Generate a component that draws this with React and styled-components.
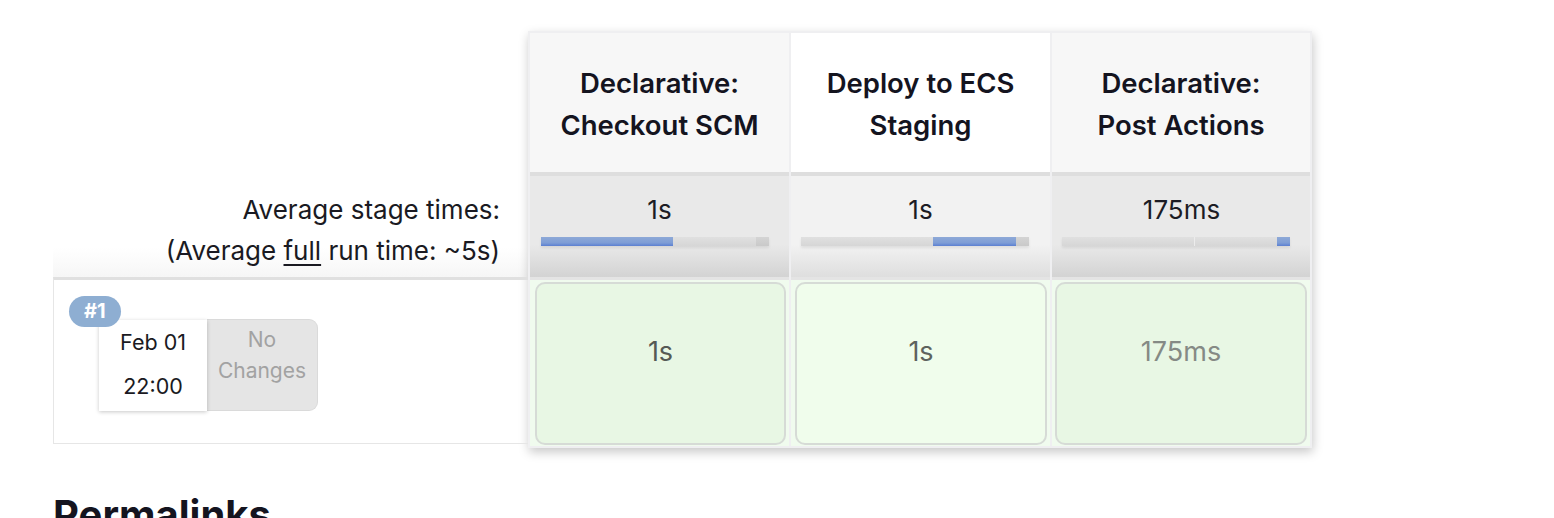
import React from "react";
import styled, { createGlobalStyle } from "styled-components";

const Global = createGlobalStyle`
  html, body { margin: 0; padding: 0; background: #ffffff; }
  body { font-family: Inter, "Noto Sans", "Liberation Sans", sans-serif; color: #14141f; overflow: hidden; }
  * { box-sizing: border-box; }
`;

const Page = styled.div`
  padding: 31px 0 0 53px;
  width: 1554px;
  height: 518px;
`;

const StageView = styled.div`
  display: flex;
  align-items: flex-start;
`;

const LeftCol = styled.div`
  width: 475px;
  margin-top: 141px;
  display: flex;
  flex-direction: column;
`;

const AvgLabel = styled.div`
  height: 105px;
  padding: 17px 28px 0 0;
  text-align: right;
  font-size: 26px;
  line-height: 41px;
  color: #1a1a22;
  background: linear-gradient(to bottom, #ffffff 72%, #f6f6f6 100%);
  white-space: nowrap;
  u { text-underline-offset: 4px; }
`;

const BuildRow = styled.div`
  position: relative;
  height: 167px;
  border-top: 3px solid #e0e0e0;
  border-left: 1px solid #e6e6e6;
  border-bottom: 1px solid #e6e6e6;
  padding: 40px 0 0 45px;
  display: flex;
  align-items: flex-start;
`;

const Badge = styled.div`
  position: absolute;
  left: 15px;
  top: 16px;
  z-index: 2;
  height: 31px;
  padding: 0 15px;
  border-radius: 16px;
  background: #8eaed2;
  color: #ffffff;
  font-weight: 700;
  font-size: 20px;
  line-height: 31px;
`;

const DateBox = styled.div`
  width: 108px;
  height: 91px;
  background: #ffffff;
  box-shadow: 0 1px 4px rgba(0, 0, 0, 0.22);
  text-align: center;
  font-size: 21.5px;
  line-height: 44px;
  color: #1a1a22;
  position: relative;
  z-index: 1;
`;

const ChangesBox = styled.div`
  width: 111px;
  height: 92px;
  margin-top: -1px;
  background: #e5e5e5;
  border: 1px solid #dadada;
  border-left: none;
  border-radius: 0 9px 9px 0;
  text-align: center;
  padding-top: 4px;
  font-size: 21px;
  line-height: 31px;
  color: #a2a2a2;
`;

const Table = styled.div`
  width: 784px;
  border: 2px solid #efeff1;
  background: #efeff1;
  box-shadow: 1px 4px 10px rgba(0, 0, 0, 0.22);
  display: grid;
  grid-template-columns: 259px 259px 258px;
  column-gap: 2px;
`;

const Column = styled.div`
  display: flex;
  flex-direction: column;
`;

const Header = styled.div`
  height: 139px;
  background: ${(p) => (p.$alt ? "#ffffff" : "#f7f7f7")};
  display: flex;
  align-items: center;
  justify-content: center;
  text-align: center;
  padding-top: 2px;
  font-weight: 600;
  font-size: 27.5px;
  line-height: 42px;
  color: #14141f;
  white-space: nowrap;
`;

const AvgCell = styled.div`
  height: 105px;
  border-top: 4px solid #dedede;
  background: ${(p) =>
    p.$alt
      ? "linear-gradient(to bottom, #f2f2f2 68%, #dedede 100%)"
      : "linear-gradient(to bottom, #e9e9e9 68%, #d3d3d3 100%)"};
  padding: 19px 0 0 ${(p) => p.$pl}px;
  display: flex;
  flex-direction: column;
`;

const AvgValue = styled.div`
  font-size: 26px;
  line-height: 30px;
  text-align: center;
  width: 259px;
  margin-left: -${(p) => p.$pl}px;
  color: #1c1c24;
`;

const Bar = styled.div`
  margin-top: 12px;
  width: 228px;
  height: 9px;
  display: flex;
  box-shadow: 0 2px 3px rgba(0, 0, 0, 0.08);
`;

const Segment = styled.div`
  height: 100%;
  background: ${(p) =>
    p.$active
      ? "linear-gradient(to bottom, #8ea9d7 0%, #7e9dd6 65%, #5b7fd1 100%)"
      : p.$dark
      ? "linear-gradient(to bottom, #d4d4d4, #c9c9c9)"
      : "linear-gradient(to bottom, #e0e0e0, #d6d6d6)"};
  border-left: ${(p) => (p.$sep ? "1px solid #ececec" : "none")};
`;

const CellWrap = styled.div`
  border-top: 3px solid #e4e4e4;
  height: 169px;
  background: #f0fbee;
  padding: 2px 3px 1px ${(p) => p.$pl}px;
`;

const StageBox = styled.div`
  height: 100%;
  border: 2px solid #d6dbd6;
  border-radius: 10px;
  background: ${(p) => p.$bg};
  text-align: center;
  padding-top: 51px;
  font-size: 27px;
  line-height: 34px;
  color: ${(p) => p.$color};
`;

const Heading = styled.h2`
  margin: 43px 0 0;
  font-size: 40px;
  line-height: 48px;
  font-weight: 700;
  color: #14141f;
`;

const segs = [58, 36.5, 5.5];

const stages = [
  {
    title: ["Declarative:", "Checkout SCM"],
    avg: "1s",
    active: 0,
    pl: 11,
    boxPl: 5,
    box: "#e8f7e4",
    color: "#555a55",
  },
  {
    title: ["Deploy to ECS", "Staging"],
    avg: "1s",
    active: 1,
    pl: 10,
    boxPl: 4,
    alt: true,
    box: "#f0fdec",
    color: "#5e635e",
  },
  {
    title: ["Declarative:", "Post Actions"],
    avg: "175ms",
    active: 2,
    pl: 10,
    boxPl: 3,
    box: "#e8f7e4",
    color: "#858a85",
  },
];

export default function App() {
  return (
    <>
      <Global />
      <Page>
        <StageView>
          <LeftCol>
            <AvgLabel>
              Average stage times:
              <br />
              (Average <u>full</u> run time: ~5s)
            </AvgLabel>
            <BuildRow>
              <Badge>#1</Badge>
              <DateBox>
                Feb 01
                <br />
                22:00
              </DateBox>
              <ChangesBox>
                No
                <br />
                Changes
              </ChangesBox>
            </BuildRow>
          </LeftCol>
          <Table>
            {stages.map((s, i) => (
              <Column key={i}>
                <Header $alt={s.alt}>
                  <div>
                    {s.title[0]}
                    <br />
                    {s.title[1]}
                  </div>
                </Header>
                <AvgCell $alt={s.alt} $pl={s.pl}>
                  <AvgValue $pl={s.pl}>{s.avg}</AvgValue>
                  <Bar>
                    {segs.map((w, j) => (
                      <Segment
                        key={j}
                        style={{ width: `${w}%` }}
                        $active={j === s.active}
                        $dark={j === 2}
                        $sep={j === 1 && s.active === 2}
                      />
                    ))}
                  </Bar>
                </AvgCell>
                <CellWrap $pl={s.boxPl}>
                  <StageBox $bg={s.box} $color={s.color}>
                    {s.avg}
                  </StageBox>
                </CellWrap>
              </Column>
            ))}
          </Table>
        </StageView>
        <Heading>Permalinks</Heading>
      </Page>
    </>
  );
}
